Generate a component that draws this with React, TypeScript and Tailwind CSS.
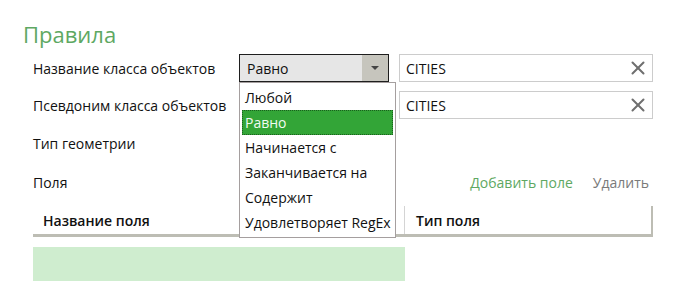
import { X } from "lucide-react";

const OPTIONS = [
  "Любой",
  "Равно",
  "Начинается с",
  "Заканчивается на",
  "Содержит",
  "Удовлетворяет RegEx",
];

function TextInput({ value }: { value: string }) {
  return (
    <div className="flex h-[28px] w-[254px] items-center justify-between border border-[#cccccc] bg-white pl-[6px] pr-[3px]">
      <span className="text-[#111111]">{value}</span>
      <X size={22} strokeWidth={2.2} className="text-[#6f6f6f]" />
    </div>
  );
}

export default function App() {
  return (
    <div
      className="relative h-[286px] w-[675px] overflow-hidden bg-white text-[14px] text-[#111111]"
      style={{ fontFamily: '"Open Sans", "Noto Sans", sans-serif' }}
    >
      <div className="pl-[23px] pt-[19px]">
        <h1 className="h-[30px] text-[22px] leading-[30px] text-[#5ea862]">Правила</h1>

        <div className="mt-[5px] flex flex-col pl-[10px]">
          <div className="flex h-[28px] items-center">
            <span className="w-[206px]">Название класса объектов</span>
            <div className="flex h-[28px] w-[150px] items-stretch border border-[#1e1e1e] bg-[#e6e6e6]">
              <span className="flex flex-1 items-center pl-[7px]">Равно</span>
              <span className="flex w-[26px] items-center justify-center bg-[#c6c5bd]">
                <span className="h-0 w-0 border-x-[4px] border-t-[4px] border-x-transparent border-t-[#444444]" />
              </span>
            </div>
            <div className="ml-[10px]">
              <TextInput value="CITIES" />
            </div>
          </div>

          <div className="mt-[9px] flex h-[28px] items-center">
            <span className="w-[366px]">Псевдоним класса объектов</span>
            <TextInput value="CITIES" />
          </div>

          <div className="mt-[10px] flex h-[28px] items-center">
            <span>Тип геометрии</span>
          </div>

          <div className="mt-[11px] flex h-[28px] items-center">
            <span className="flex-1">Поля</span>
            <span className="text-[#5ea862]">Добавить поле</span>
            <span className="ml-[20px] mr-[26px] text-[#7a7a7a]">Удалить</span>
          </div>

          <div className="mt-[10px] flex w-[620px] border-b-[3px] border-[#bdbdb4]">
            <div className="flex h-[28px] w-[372px] items-center border-r border-[#d4d4d4] pl-[10px] font-semibold">
              Название поля
            </div>
            <div className="flex h-[28px] flex-1 items-center border-r-2 border-[#bdbdb4] pl-[11px] font-semibold">
              Тип поля
            </div>
          </div>

          <div className="mt-[10px] h-[34px] w-[372px] bg-[#cfedcf]" />
        </div>
      </div>

      <div className="absolute left-[239px] top-[82px] w-[157px] border border-[#a59f9f] bg-white py-[2px]">
        {OPTIONS.map((opt) => (
          <div
            key={opt}
            className={
              opt === "Равно"
                ? "mx-[2px] flex h-[25px] items-center border border-dotted border-[#1b5e1e] bg-[#33a537] pl-[2px] text-[#f2fbf2]"
                : "mx-[2px] flex h-[25px] items-center border border-transparent pl-[2px]"
            }
          >
            {opt}
          </div>
        ))}
      </div>
    </div>
  );
}
